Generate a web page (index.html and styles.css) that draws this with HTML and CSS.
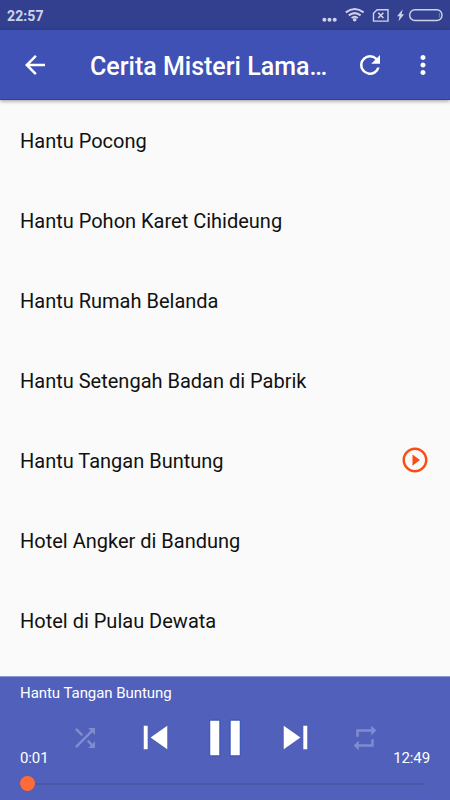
FILE: index.html
```html
<!DOCTYPE html>
<html lang="id">
<head>
<meta charset="utf-8">
<title>Cerita Misteri</title>
<link rel="stylesheet" href="styles.css">
</head>
<body>
<div class="screen">
  <header class="status">
    <span class="clock">22:57</span>
    <svg class="status-icons" width="128" height="30" viewBox="0 0 128 30">
      <g fill="#cfd3ea">
        <circle cx="2.4" cy="19.8" r="2"/><circle cx="7.5" cy="19.8" r="2"/><circle cx="12.7" cy="19.8" r="2"/>
        <circle cx="32.7" cy="19.8" r="1.8"/>
        <path d="M80.7 9.2l-5.6 7h2.5l-1.1 5 5.6-7h-2.6z"/>
      </g>
      <g fill="none" stroke="#cfd3ea" stroke-width="2">
        <path d="M23.8 12.4q8.9-6.8 17.8 0M26.8 15.4q5.9-4.6 11.8 0M29.6 18.1q3.1-2.6 6.2 0"/>
        <path stroke-width="1.4" d="M55.2 9.7h10.8v11.4H51.5v-7.8z"/>
        <path stroke-width="1.6" d="M56.2 12.8l5.2 5.2m0-5.2L56.2 18"/>
        <rect x="87.7" y="9.7" width="32.3" height="10.8" rx="5.2" stroke-width="1.4"/>
      </g>
      <path d="M117.5 13v4.5" stroke="#3aa935" stroke-width="1.3"/>
    </svg>
  </header>
  <nav class="appbar">
    <svg class="icon" viewBox="0 0 24 24"><path d="M20 11H7.83l5.59-5.59L12 4l-8 8 8 8 1.41-1.41L7.83 13H20v-2z"/></svg>
    <h1 class="title">Cerita Misteri Lama…</h1>
    <svg class="icon refresh" viewBox="0 0 24 24"><path d="M17.65 6.35A7.96 7.96 0 0 0 12 4a8 8 0 1 0 7.73 10h-2.08A6 6 0 1 1 12 6c1.66 0 3.14.69 4.22 1.78L13 11h7V4l-2.35 2.35z"/></svg>
    <svg class="icon" viewBox="0 0 24 24"><path d="M12 8c1.1 0 2-.9 2-2s-.9-2-2-2-2 .9-2 2 .9 2 2 2zm0 2c-1.1 0-2 .9-2 2s.9 2 2 2 2-.9 2-2-.9-2-2-2zm0 6c-1.1 0-2 .9-2 2s.9 2 2 2 2-.9 2-2-.9-2-2-2z"/></svg>
  </nav>
  <ul class="list">
    <li>Hantu Pocong</li>
    <li>Hantu Pohon Karet Cihideung</li>
    <li>Hantu Rumah Belanda</li>
    <li>Hantu Setengah Badan di Pabrik</li>
    <li>Hantu Tangan Buntung
      <svg class="icon playing" viewBox="0 0 24 24"><path d="M10 16.5l6-4.5-6-4.5v9zM12 2C6.48 2 2 6.48 2 12s4.48 10 10 10 10-4.48 10-10S17.52 2 12 2zm0 18c-4.41 0-8-3.59-8-8s3.59-8 8-8 8 3.59 8 8-3.59 8-8 8z"/></svg>
    </li>
    <li>Hotel Angker di Bandung</li>
    <li>Hotel di Pulau Dewata</li>
  </ul>
  <footer class="player">
    <div class="track-name">Hantu Tangan Buntung</div>
    <div class="controls">
      <span class="time">0:01</span>
      <div class="buttons">
        <svg class="icon dim" viewBox="0 0 24 24"><path d="M10.59 9.17L5.41 4 4 5.41l5.17 5.17 1.42-1.41zM14.5 4l2.04 2.04L4 18.59 5.41 20 17.96 7.46 20 9.5V4h-5.5zm.33 9.41l-1.41 1.41 3.13 3.13L14.5 20H20v-5.5l-2.04 2.04-3.13-3.13z"/></svg>
        <svg class="icon skip prev" viewBox="0 0 24 24"><path d="M6 6h2v12H6zm3.5 6l8.5 6V6z"/></svg>
        <svg class="icon pause" viewBox="0 0 24 24"><path d="M6.1 18.9h3.9V5.1H6.1zM14 5.1v13.8h3.9V5.1z"/></svg>
        <svg class="icon skip next" viewBox="0 0 24 24"><path d="M6 18l8.5-6L6 6v12zM16 6v12h2V6h-2z"/></svg>
        <svg class="icon dim" viewBox="0 0 24 24"><path d="M7 7h10v3l4-4-4-4v3H5v6h2V7zm10 10H7v-3l-4 4 4 4v-3h12v-6h-2v4z"/></svg>
      </div>
      <span class="time">12:49</span>
    </div>
    <div class="seek"><span class="thumb"></span><span class="rail"></span></div>
  </footer>
</div>
</body>
</html>
```
FILE: styles.css
```css
* { box-sizing: border-box; }
body { margin: 0; font-family: Roboto, "Liberation Sans", sans-serif; }
.screen {
  width: 450px;
  height: 800px;
  display: flex;
  flex-direction: column;
  overflow: hidden;
  background: #fafafa;
}
.icon { display: block; flex: none; width: 30px; height: 30px; fill: #fff; }
.status {
  height: 30px;
  flex: none;
  display: flex;
  align-items: center;
  justify-content: space-between;
  background: #334090;
  padding-left: 7px;
}
.clock { font-size: 14px; line-height: 30px; font-weight: 700; color: #cfd3ea; padding-top: 2px; letter-spacing: .1px; }
.status-icons { display: block; }
.appbar {
  height: 70px;
  flex: none;
  display: flex;
  align-items: center;
  padding: 0 12.5px 0 20px;
  background: #3f51b5;
  box-shadow: inset 0 -1px #2c3fa8, 0 1px 4px rgba(0, 0, 0, .4);
  z-index: 1;
}
.title { flex: 1; margin: 3px 0 0 40px; font-size: 25px; line-height: 29px; font-weight: 500; color: #fff; white-space: nowrap; }
.refresh { margin-right: 22.5px; }
.list { flex: 1; margin: 0; padding: 0; list-style: none; overflow: hidden; }
.list li {
  height: 80px;
  display: flex;
  align-items: center;
  justify-content: space-between;
  padding: 2px 20px 0;
  font-size: 20px;
  line-height: 24px;
  color: #111;
}
.playing { fill: #fa4d14; margin-top: -2px; }
.player {
  height: 124px;
  flex: none;
  display: flex;
  flex-direction: column;
  background: #5161bb;
  border-top: 1px solid #8e98cd;
  color: #fff;
  font-size: 15px;
}
.track-name { height: 32px; line-height: 32px; padding-left: 20px; letter-spacing: -.05px; }
.controls {
  height: 58px;
  display: flex;
  align-items: flex-end;
  justify-content: space-between;
  padding: 0 20px;
}
.time { width: 50px; line-height: 18px; letter-spacing: -.1px; }
.time:last-child { text-align: right; }
.buttons { height: 59px; width: 310px; display: flex; align-items: center; justify-content: space-between; }
.dim { opacity: .27; }
.skip { width: 47px; height: 47px; }
.prev { margin-left: 16px; }
.next { margin-right: 16px; }
.pause { width: 62px; height: 62px; stroke: #2747b5; stroke-width: .35px; }
.seek { display: flex; align-items: center; height: 34px; padding: 0 26px 0 20px; }
.thumb { width: 15px; height: 15px; border-radius: 50%; background: #ff6b37; }
.rail { flex: 1; height: 2px; background: #4a58a8; }
```
